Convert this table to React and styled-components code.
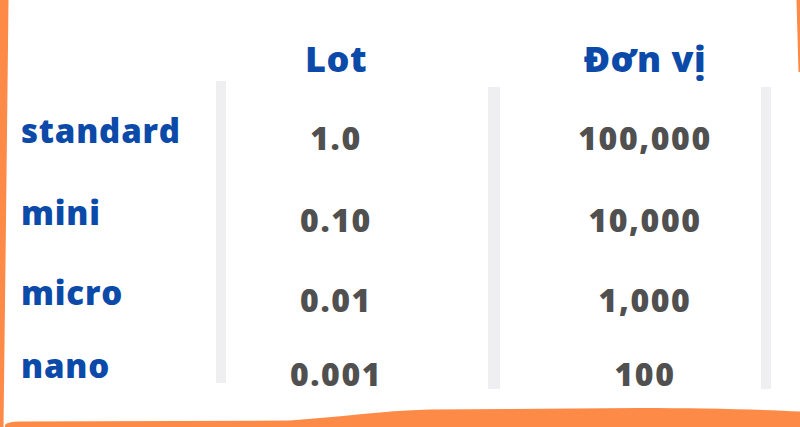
import React from 'react'
import styled, { createGlobalStyle } from 'styled-components'

const GlobalStyle = createGlobalStyle`
  html, body {
    margin: 0;
    padding: 0;
    background: #ffffff;
  }
  body {
    font-family: "Open Sans", "Liberation Sans", sans-serif;
  }
`

const Page = styled.div`
  position: relative;
  width: 800px;
  height: 427px;
  overflow: hidden;
  background: #ffffff;
`

const Frame = styled.svg`
  position: absolute;
  left: 0;
  top: 0;
  width: 800px;
  height: 427px;
  pointer-events: none;
`

const Table = styled.div`
  position: relative;
  display: grid;
  grid-template-columns: 216px 10px 262px 12px 261px 10px;
  grid-template-rows: 81px auto;
`

const Head = styled.div`
  grid-row: 1;
  grid-column: ${p => p.col};
  padding-top: 37px;
  padding-left: ${p => p.pl || 0}px;
  padding-right: ${p => p.pr || 0}px;
  text-align: center;
  font-size: 36px;
  line-height: 44px;
  font-weight: 800;
  letter-spacing: 0.5px;
  color: #0b4aa8;
  white-space: nowrap;
`

const LabelCol = styled.div`
  grid-row: 2;
  grid-column: 1;
  padding-left: 21px;
`

const Label = styled.div`
  height: ${p => p.h}px;
  padding-top: ${p => p.top || 0}px;
  font-size: 33px;
  line-height: 40px;
  font-weight: 800;
  letter-spacing: 0.8px;
  color: #0b4aa8;
`

const Bar = styled.div`
  grid-row: 2;
  grid-column: ${p => p.col};
  margin-top: ${p => p.offset}px;
  height: 302px;
  background: #efeff1;
`

const ValueCol = styled.div`
  grid-row: 2;
  grid-column: ${p => p.col};
  padding-left: ${p => p.pl || 0}px;
  padding-right: ${p => p.pr || 0}px;
  text-align: center;
`

const Value = styled.div`
  height: ${p => p.h}px;
  padding-top: ${p => p.top || 0}px;
  font-size: 32px;
  line-height: 40px;
  font-weight: 800;
  color: #505050;
  letter-spacing: 1.6px;
`

const rows = [
  { name: 'standard', lot: '1.0', unit: '100,000' },
  { name: 'mini', lot: '0.10', unit: '10,000' },
  { name: 'micro', lot: '0.01', unit: '1,000' },
  { name: 'nano', lot: '0.001', unit: '100' },
]

const labelH = [82, 80, 73, 40]
const valueH = [82, 80, 74, 40]

export default function App() {
  return (
    <Page>
      <GlobalStyle />
      <Frame viewBox="0 0 800 427">
        <polygon points="0,0 8.5,0 6,220 3.5,427 0,427" fill="#fd8a47" />
        <polygon points="796.5,0 800,0 800,72 798.5,72" fill="#fd8a47" />
        <path
          d="M5 427 L5 425 Q7 421.5 20 421.5 L290 420.5 C340 417 380 411 430 409.5 L640 408 C700 408 760 409.5 800 411.5 L800 427 Z"
          fill="#fd8a47"
        />
      </Frame>
      <Table>
        <Head col={3} pr={42}>Lot</Head>
        <Head col={5} pl={29}>Đơn vị</Head>

        <LabelCol>
          {rows.map((r, i) => (
            <Label key={r.name} h={labelH[i]} top={i === 0 ? 30 : 0}>{r.name}</Label>
          ))}
        </LabelCol>
        <Bar col={2} offset={0} />

        <ValueCol col={3} pr={42}>
          {rows.map((r, i) => (
            <Value key={r.name} h={valueH[i]} top={i === 0 ? 37 : 0}>{r.lot}</Value>
          ))}
        </ValueCol>
        <Bar col={4} offset={6} />

        <ValueCol col={5} pl={29}>
          {rows.map((r, i) => (
            <Value key={r.name} h={valueH[i]} top={i === 0 ? 37 : 0}>{r.unit}</Value>
          ))}
        </ValueCol>
        <Bar col={6} offset={6} />
      </Table>
    </Page>
  )
}
